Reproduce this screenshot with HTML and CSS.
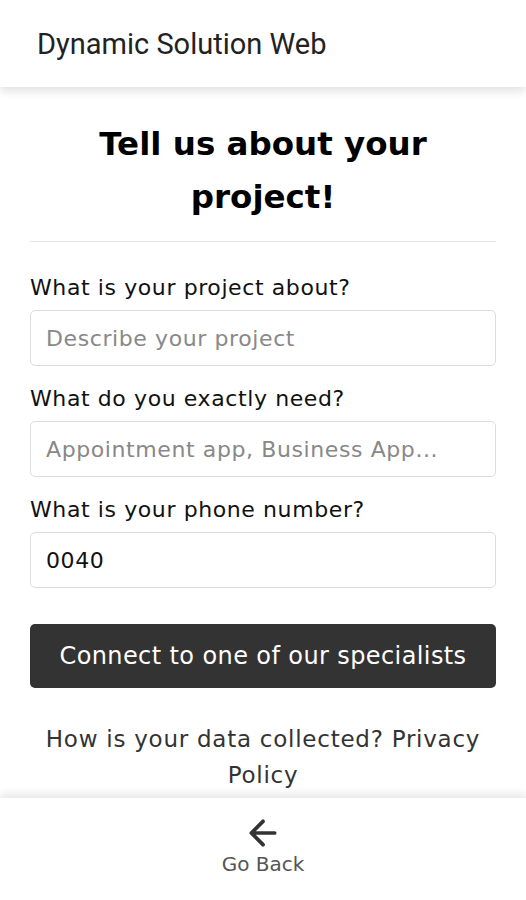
FILE: index.html
```html
<!DOCTYPE html>
<html lang="en">
<head>
    <meta charset="UTF-8">
    <meta name="viewport" content="width=device-width, initial-scale=1.0">
    <title>Dynamic Solution Web</title>
    <link rel="stylesheet" href="styles.css">
</head>
<body>
    <div class="page">
        <div class="app-bar">
            <span class="app-title">Dynamic Solution Web</span>
        </div>

        <div class="content">
            <h1 class="title">Tell us about your project!</h1>
            <hr class="divider">

            <form class="project-form">
                <label for="about">What is your project about?</label>
                <input type="text" id="about" placeholder="Describe your project">

                <label for="need">What do you exactly need?</label>
                <input type="text" id="need" placeholder="Appointment app, Business App...">

                <label for="phone">What is your phone number?</label>
                <input type="tel" id="phone" value="0040">

                <button type="button" class="connect-btn">Connect to one of our specialists</button>
            </form>

            <p class="privacy">How is your data collected? Privacy Policy</p>
        </div>

        <div class="bottom-bar">
            <svg class="back-icon" width="28" height="28" viewBox="3 3 18 18">
                <path d="M19.5 12H4.8M12 4.5L4.5 12l7.5 7.5" fill="none" stroke="#333" stroke-width="2.4" stroke-linecap="round" stroke-linejoin="round"/>
            </svg>
            <span class="back-label">Go Back</span>
        </div>
    </div>
</body>
</html>
```

FILE: styles.css
```css
body {
    margin: 0;
    padding: 0;
    background: #fff;
    font-family: "DejaVu Sans", "Open Sans", sans-serif;
    color: #111;
}
.page {
    height: 100vh;
    display: flex;
    flex-direction: column;
    overflow: hidden;
}
.app-bar {
    height: 87px;
    flex-shrink: 0;
    display: flex;
    align-items: center;
    padding-left: 37px;
    box-shadow: 0 4px 9px rgba(0, 0, 0, 0.12);
    position: relative;
    z-index: 1;
}
.app-title {
    font-family: Roboto, sans-serif;
    font-size: 29px;
    color: #222;
}
.content {
    flex: 1;
    padding: 0 30px;
}
.title {
    margin: 31px 20px 0;
    text-align: center;
    font-size: 32.5px;
    line-height: 53px;
    font-weight: 700;
    color: #000;
}
.divider {
    border: none;
    border-top: 1px solid #e6e6e6;
    margin: 17px 0 0;
}
.project-form {
    display: flex;
    flex-direction: column;
    padding-top: 33px;
}
.project-form label {
    font-size: 22px;
    letter-spacing: 0.6px;
    line-height: 26px;
    color: #111;
    margin-bottom: 9px;
}
.project-form input {
    height: 56px;
    box-sizing: border-box;
    border: 1px solid #dcdcdc;
    border-radius: 5px;
    padding: 0 15px;
    font-family: inherit;
    font-size: 22px;
    letter-spacing: 0.6px;
    color: #111;
    margin-bottom: 20px;
}
.project-form input::placeholder {
    color: #888;
}
.connect-btn {
    margin-top: 16px;
    height: 64px;
    border: none;
    border-radius: 5px;
    background: #333;
    color: #fff;
    font-family: inherit;
    font-size: 24px;
    letter-spacing: 0.4px;
}
.privacy {
    margin: 33px 0 0;
    text-align: center;
    font-size: 23px;
    letter-spacing: 0.75px;
    line-height: 36px;
    color: #333;
}
.bottom-bar {
    height: 102px;
    flex-shrink: 0;
    display: flex;
    flex-direction: column;
    align-items: center;
    padding-top: 21px;
    box-sizing: border-box;
    box-shadow: 0 -4px 8px rgba(0, 0, 0, 0.1);
    background: #fff;
    position: relative;
}
.back-icon {
    display: block;
}
.back-label {
    font-size: 20px;
    line-height: 24px;
    color: #555;
    margin-top: 5px;
}
```
